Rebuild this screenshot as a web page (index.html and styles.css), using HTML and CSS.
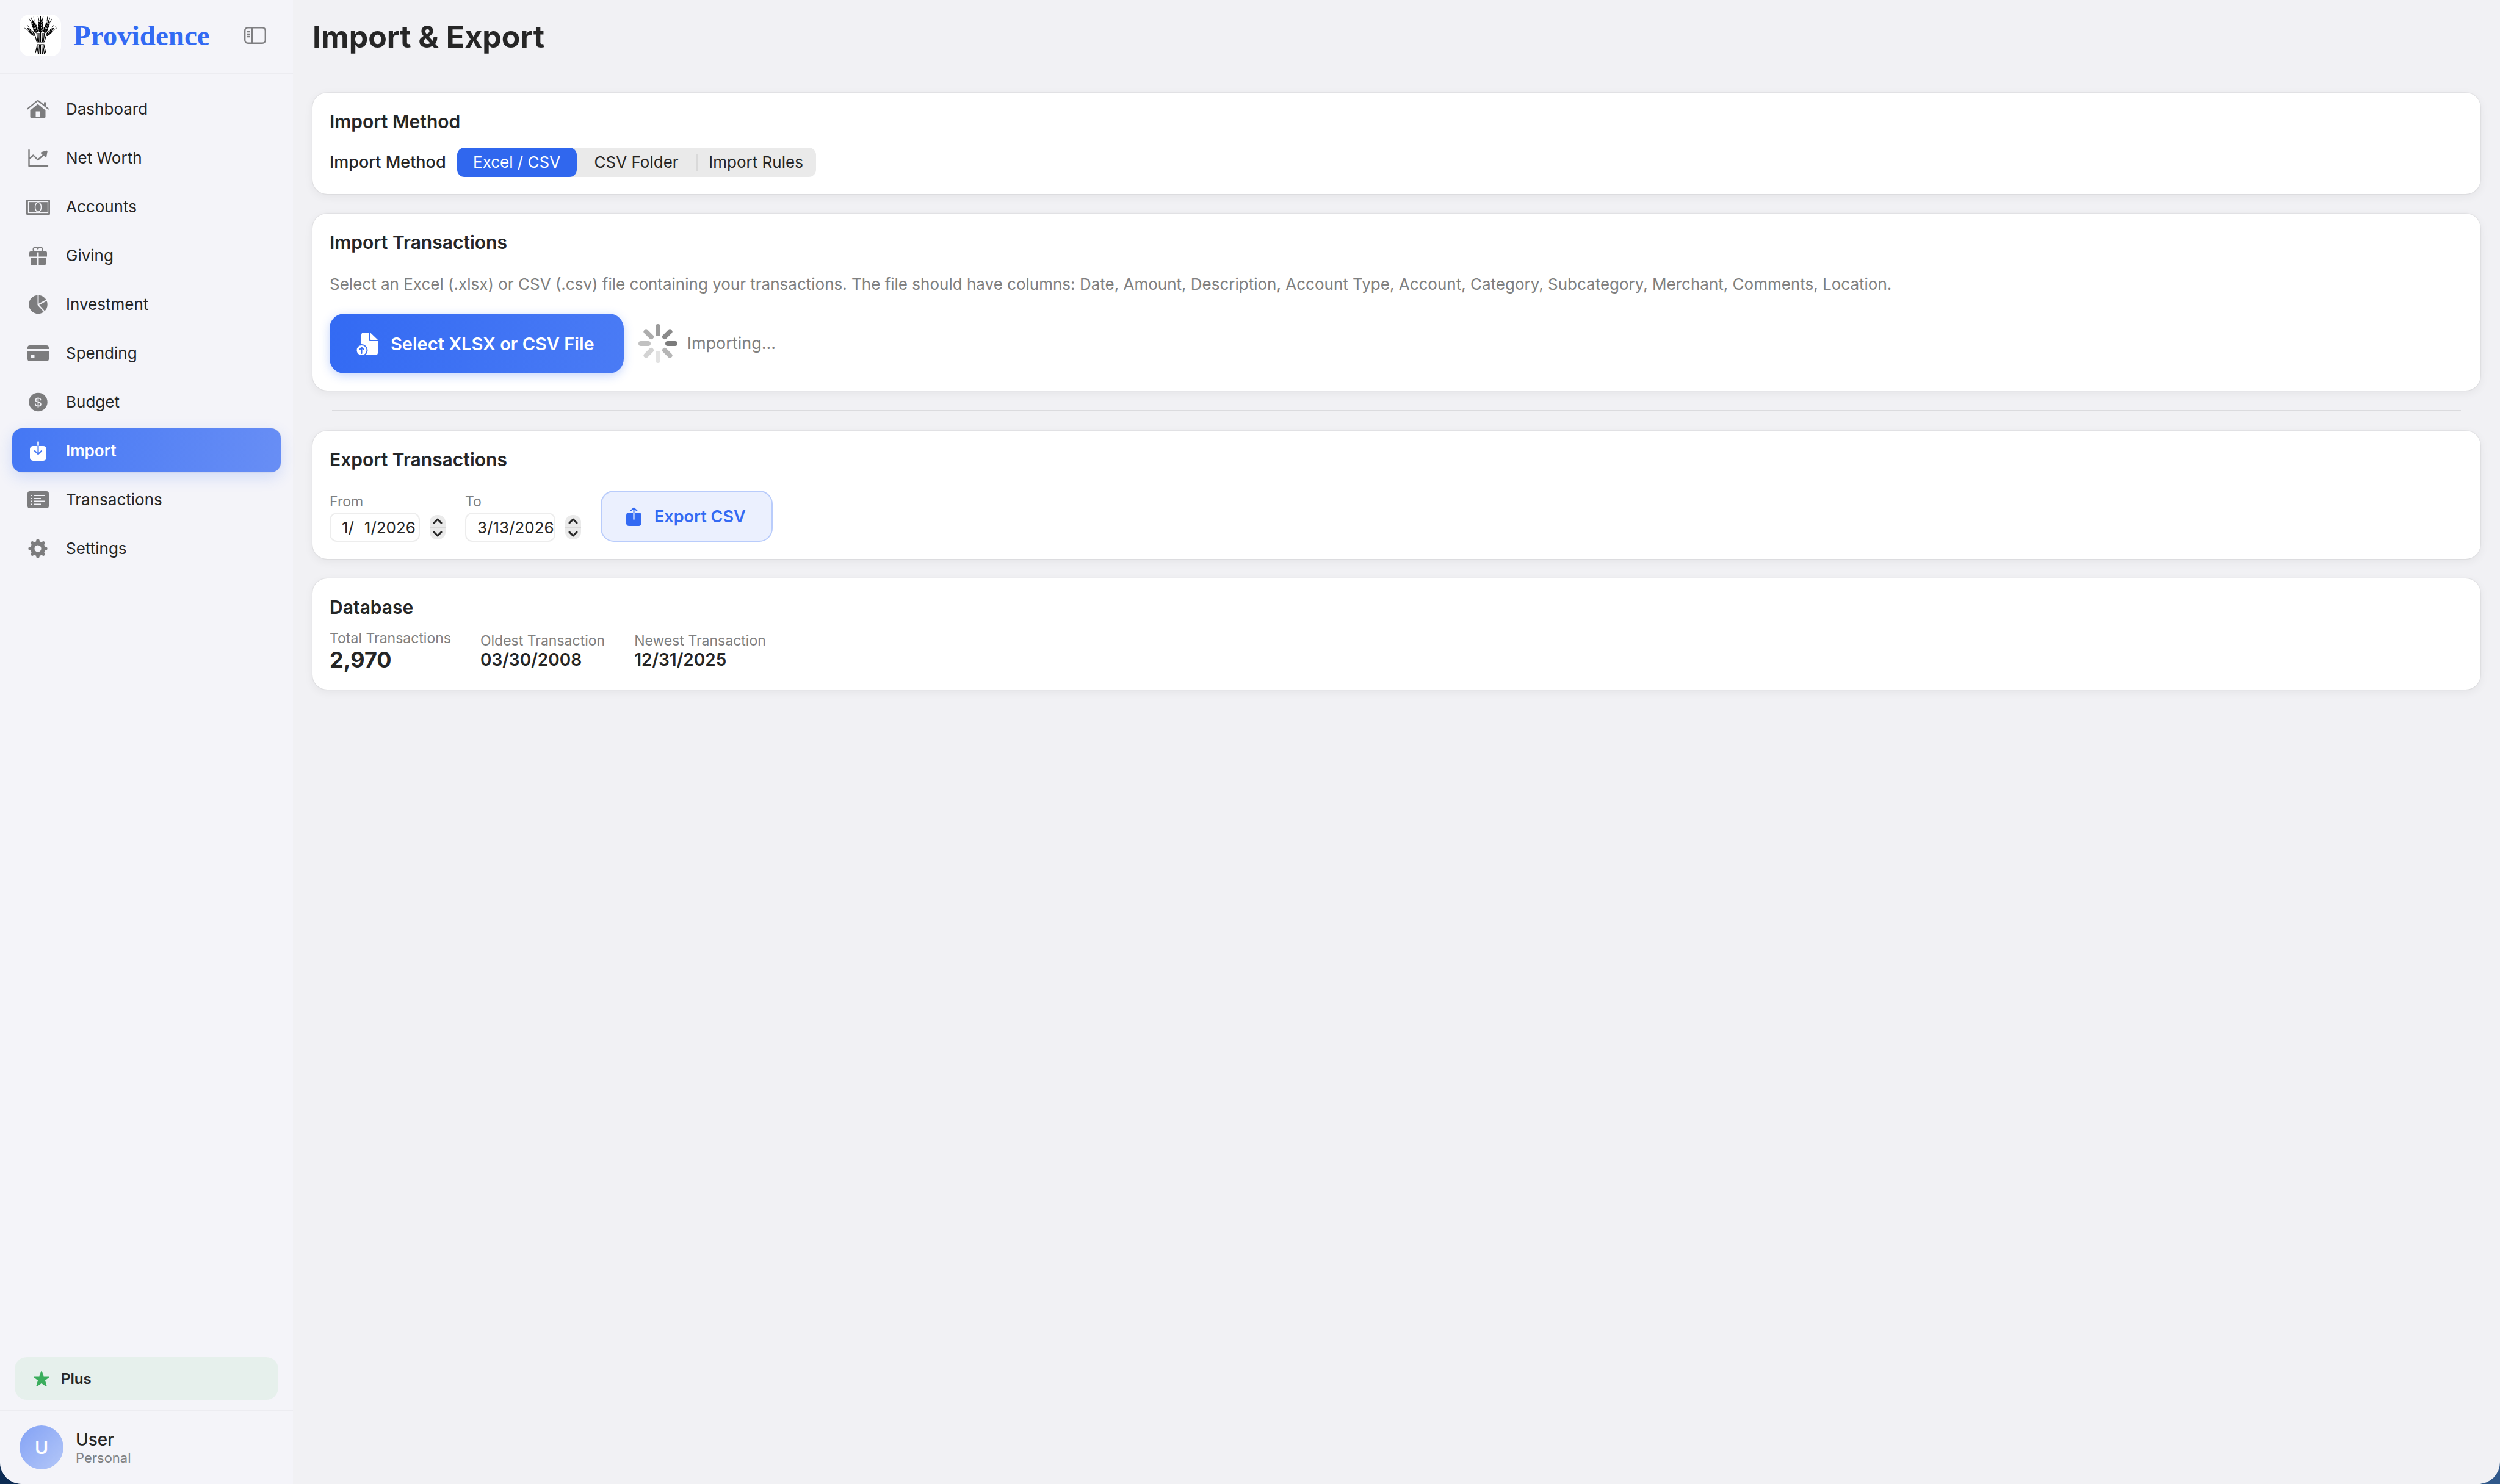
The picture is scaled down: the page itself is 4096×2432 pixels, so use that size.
FILE: index.html
```html
<!DOCTYPE html>
<html lang="en">
<head>
    <meta charset="UTF-8">
    <meta name="viewport" content="width=device-width, initial-scale=1.0">
    <title>Providence - Import &amp; Export</title>
    <link rel="stylesheet" href="styles.css">
</head>
<body>

    <div class="window">
        <!-- Sidebar -->
        <aside class="sidebar">
            <header class="brand">
                <svg class="brand-logo" viewBox="0 0 68 68" aria-hidden="true">
                    <defs>
                        <g id="ear">
                            <path d="M0 0V-27M-2.500 -19L-4.500 -27M2.500 -19L4.500 -27" stroke="#000" stroke-width="1" fill="none"/>
                            <ellipse cx="0" cy="-19" rx="1.500" ry="3"/>
                            <ellipse cx="-2" cy="-15" rx="1.400" ry="2.800" transform="rotate(-28 -2 -15)"/>
                            <ellipse cx="2" cy="-15" rx="1.400" ry="2.800" transform="rotate(28 2 -15)"/>
                            <ellipse cx="-2.200" cy="-10.500" rx="1.500" ry="2.800" transform="rotate(-28 -2.200 -10.500)"/>
                            <ellipse cx="2.200" cy="-10.500" rx="1.500" ry="2.800" transform="rotate(28 2.200 -10.500)"/>
                            <ellipse cx="-2.200" cy="-6" rx="1.500" ry="2.800" transform="rotate(-28 -2.200 -6)"/>
                            <ellipse cx="2.200" cy="-6" rx="1.500" ry="2.800" transform="rotate(28 2.200 -6)"/>
                            <ellipse cx="-1.800" cy="-2" rx="1.300" ry="2.400" transform="rotate(-28 -1.800 -2)"/>
                            <ellipse cx="1.800" cy="-2" rx="1.300" ry="2.400" transform="rotate(28 1.800 -2)"/>
                        </g>
                    </defs>
                    <use href="#ear" transform="translate(34.500 29)"/>
                    <use href="#ear" transform="translate(28 29) rotate(-20) scale(.95)"/>
                    <use href="#ear" transform="translate(41 29) rotate(20) scale(.95)"/>
                    <use href="#ear" transform="translate(25 34) rotate(-45) scale(.75)"/>
                    <use href="#ear" transform="translate(44 34) rotate(45) scale(.75)"/>
                    <g fill="none" stroke="#000" stroke-width="1.200">
                        <path d="M34.500 29V45M32 30V45M37 30V45M28 29L30 45M41 29L39 45M25 33L28.500 45M44 33L40.500 45M30 30L31 45M39 30L38 45"/>
                        <path d="M34.500 50V65M32.500 50L31.500 65M36.500 50L37.500 65M30.500 50L28.500 64M38.500 50L40.500 64M29 50L26 63M40 50L43 63"/>
                    </g>
                    <path d="M28.500 45.500h12v1.500h-12zM28.500 48.500h12V50h-12z"/>
                </svg>
                <span class="brand-name">Providence</span>
                <button class="sidebar-toggle" type="button" aria-label="Toggle sidebar">
                    <svg viewBox="0 0 36 28" fill="none" stroke="currentColor" stroke-width="2.400" aria-hidden="true">
                        <rect x="1.200" y="1.200" width="33.600" height="25.600" rx="5"/>
                        <path d="M13 1v26M5 8h5M5 12h5M5 16h5"/>
                    </svg>
                </button>
            </header>

            <nav class="nav">
                <a class="nav-item" href="#dashboard">
                    <svg class="nav-icon" viewBox="0 0 40 32" aria-hidden="true">
                        <path d="M3 15.500L18.600 2.600q1.400-1.100 2.800 0L37 15.500" fill="none" stroke="currentColor" stroke-width="2.200" stroke-linecap="round"/>
                        <path d="M30 4.500h3.500v8.500L30 10zM20 7.500l12.500 10.300V28q0 3-3 3h-19q-3 0-3-3V17.800zM16.500 19.500V29h7.500v-9.500z" fill="currentColor" fill-rule="evenodd"/>
                    </svg>
                    Dashboard
                </a>
                <a class="nav-item" href="#net-worth">
                    <svg class="nav-icon" viewBox="0 0 40 32" fill="none" stroke="currentColor" stroke-width="2.400" stroke-linecap="round" stroke-linejoin="round" aria-hidden="true">
                        <path d="M5.500 3v26H36M6 17l6.500-5.500L20 19l9.500-8.500"/>
                        <path d="M26 7.500l8.500-2.500-1.500 8.500z" fill="currentColor"/>
                    </svg>
                    Net Worth
                </a>
                <a class="nav-item" href="#accounts">
                    <svg class="nav-icon" viewBox="0 0 40 32" aria-hidden="true">
                        <rect x="1" y="4" width="39" height="25" rx="1.500" fill="currentColor"/>
                        <rect x="4.500" y="7.500" width="32" height="18" fill="none" stroke="#f4f4f9" stroke-width="1.300"/>
                        <ellipse cx="20.500" cy="16.500" rx="5" ry="7.800" fill="currentColor" stroke="#f4f4f9" stroke-width="1.500"/>
                    </svg>
                    Accounts
                </a>
                <a class="nav-item" href="#giving">
                    <svg class="nav-icon" viewBox="0 0 40 32" aria-hidden="true">
                        <path d="M20 9.500h-5a3.800 3.800 0 1 1 5-4.200a3.800 3.800 0 1 1 5 4.200z" fill="none" stroke="currentColor" stroke-width="2"/>
                        <path d="M8 9h11v8.500H6V11q0-2 2-2zM21.500 9H33q2 0 2 2v6.500H21.500zM8 19.500h11V32h-8q-3 0-3-3zM21.500 19.500H33V29q0 3-3 3h-8.500z" fill="currentColor"/>
                    </svg>
                    Giving
                </a>
                <a class="nav-item" href="#investment">
                    <svg class="nav-icon" viewBox="0 0 40 32" aria-hidden="true">
                        <circle cx="20.500" cy="16" r="15.200" fill="currentColor"/>
                        <path d="M20.500 0v16.500L32 29M20.500 16.500L36 8" fill="none" stroke="#f4f4f9" stroke-width="2"/>
                    </svg>
                    Investment
                </a>
                <a class="nav-item" href="#spending">
                    <svg class="nav-icon" viewBox="0 0 40 32" aria-hidden="true">
                        <path d="M3 9V7q0-4 4-4h27q4 0 4 4v2zM3 12.500h35V25q0 4-4 4H7q-4 0-4-4zM9.500 18Q8 18 8 19.500v3Q8 24 9.500 24h3.500q1.500 0 1.500-1.500v-3Q14.500 18 13 18z" fill="currentColor" fill-rule="evenodd"/>
                    </svg>
                    Spending
                </a>
                <a class="nav-item" href="#budget">
                    <svg class="nav-icon" viewBox="0 0 40 32" aria-hidden="true">
                        <circle cx="20.500" cy="16" r="15.200" fill="currentColor"/>
                        <path d="M24.700 12.500q-.5-3-4.200-3t-4.200 2.900q0 2.600 4.200 3.400t4.400 3.600q0 3.100-4.400 3.100t-4.500-3.300M20.500 7.500v17" fill="none" stroke="#f4f4f9" stroke-width="1.700" stroke-linecap="round"/>
                    </svg>
                    Budget
                </a>
                <a class="nav-item active" href="#import" aria-current="page">
                    <svg class="nav-icon" viewBox="0 0 40 32" aria-hidden="true">
                        <rect x="7" y="8" width="27" height="24" rx="5" fill="#fff"/>
                        <path d="M20.500 1.500V8" stroke="#fff" stroke-width="2.600" stroke-linecap="round"/>
                        <path d="M20.500 8v12.500M15 16l5.500 5.200L26 16" fill="none" stroke="#487af4" stroke-width="2.200" stroke-linecap="round" stroke-linejoin="round"/>
                    </svg>
                    Import
                </a>
                <a class="nav-item" href="#transactions">
                    <svg class="nav-icon" viewBox="0 0 40 32" aria-hidden="true">
                        <rect x="3" y="2" width="35" height="28" rx="4" fill="currentColor"/>
                        <path d="M8.500 9H11M8.500 14H11M8.500 18.500H11M8.500 23.500H11M13.500 9H32M13.500 14H25M13.500 18.500H32M13.500 23.500H25" stroke="#f4f4f9" stroke-width="2"/>
                    </svg>
                    Transactions
                </a>
                <a class="nav-item" href="#settings">
                    <svg class="nav-icon" viewBox="0 0 40 32" fill="none" stroke="currentColor" aria-hidden="true">
                        <circle cx="20" cy="16" r="8.800" stroke-width="6.500"/>
                        <path d="M20 3.200v2.500M20 26.300v2.500M7.200 16h2.500M30.300 16h2.500M11 7l2 2M27 23l2 2M11 25l2-2M27 9l2-2" stroke-width="5.600" stroke-linecap="round"/>
                    </svg>
                    Settings
                </a>
            </nav>

            <div class="plan">
                <svg class="plan-icon" viewBox="0 0 28 28" fill="#3bad5d" stroke="#3bad5d" stroke-width="2" stroke-linejoin="round" aria-hidden="true">
                    <path d="M14 2l2.900 8.500h9.100l-7.200 5.400L21.500 25 14 19.600 6.500 25l2.700-9.100L2 10.500h9.100z"/>
                </svg>
                Plus
            </div>

            <footer class="user">
                <div class="avatar">U</div>
                <div class="user-info">
                    <div class="user-name">User</div>
                    <div class="user-type">Personal</div>
                </div>
            </footer>
        </aside>

        <!-- Main content -->
        <main class="main">
            <h1 class="page-title">Import &amp; Export</h1>

            <section class="card">
                <h2 class="card-title">Import Method</h2>
                <div class="method" role="radiogroup" aria-labelledby="method-label">
                    <span class="method-label" id="method-label">Import Method</span>
                    <div class="segments">
                        <label class="segment"><input type="radio" name="method" checked><span>Excel / CSV</span></label>
                        <label class="segment"><input type="radio" name="method"><span>CSV Folder</span></label>
                        <label class="segment divided"><input type="radio" name="method"><span>Import Rules</span></label>
                    </div>
                </div>
            </section>

            <section class="card">
                <h2 class="card-title">Import Transactions</h2>
                <p class="description">Select an Excel (.xlsx) or CSV (.csv) file containing your transactions. The file should have columns: Date, Amount, Description, Account Type, Account, Category, Subcategory, Merchant, Comments, Location.</p>
                <div class="import-row">
                    <button class="button-primary" type="button">
                        <svg class="file-icon" viewBox="0 0 36 38" aria-hidden="true">
                            <path d="M12 0h8v12q0 2 2 2h13v19q0 4-4 4H12q-4 0-4-4V4q0-4 4-4z" fill="#fff"/>
                            <path d="M22.500 0L35 12H24q-1.500 0-1.500-1.500z" fill="#fff"/>
                            <circle cx="8.500" cy="29" r="9" fill="#fff" stroke="#3a6ff4" stroke-width="2"/>
                            <path d="M8.500 34V24.500M5 28l3.500-3.500L12 28" fill="none" stroke="#3a6ff4" stroke-width="2" stroke-linecap="round" stroke-linejoin="round"/>
                        </svg>
                        Select XLSX or CSV File
                    </button>
                    <div class="progress" role="status">
                        <svg class="spinner" viewBox="-32 -32 64 64" stroke-width="8" stroke-linecap="round" aria-hidden="true">
                            <path d="M0 -16V-28" stroke="#9b9b9b"/>
                            <path d="M11 -11L19.500 -19.500" stroke="#8a8a8a"/>
                            <path d="M16 0H28" stroke="#7b7b7b"/>
                            <path d="M11 11L19.500 19.500" stroke="#b6b6b6"/>
                            <path d="M0 16V28" stroke="#e3e3e3"/>
                            <path d="M-11 11L-19.500 19.500" stroke="#d3d3d3"/>
                            <path d="M-16 0H-28" stroke="#c1c1c1"/>
                            <path d="M-11 -11L-19.500 -19.500" stroke="#adadad"/>
                        </svg>
                        Importing...
                    </div>
                </div>
            </section>

            <hr class="divider">

            <section class="card">
                <h2 class="card-title">Export Transactions</h2>
                <div class="export-row">
                    <div class="field">
                        <label for="from">From</label>
                        <div class="date">
                            <input id="from" type="text" value="1/&#8199;1/2026">
                            <div class="stepper">
                                <button type="button" aria-label="Later start date"><svg viewBox="0 0 16 10"><path d="M2 8l6-6 6 6"/></svg></button>
                                <button type="button" aria-label="Earlier start date"><svg viewBox="0 0 16 10"><path d="M2 2l6 6 6-6"/></svg></button>
                            </div>
                        </div>
                    </div>
                    <div class="field">
                        <label for="to">To</label>
                        <div class="date">
                            <input id="to" type="text" value="3/13/2026">
                            <div class="stepper">
                                <button type="button" aria-label="Later end date"><svg viewBox="0 0 16 10"><path d="M2 8l6-6 6 6"/></svg></button>
                                <button type="button" aria-label="Earlier end date"><svg viewBox="0 0 16 10"><path d="M2 2l6 6 6-6"/></svg></button>
                            </div>
                        </div>
                    </div>
                    <button class="button-secondary" type="button">
                        <svg class="share-icon" viewBox="0 0 26 32" aria-hidden="true">
                            <rect x="0" y="9" width="25" height="22" rx="4.500" fill="currentColor"/>
                            <path d="M12.500 9v11" stroke="#ebf0fe" stroke-width="2.200" stroke-linecap="round"/>
                            <path d="M12.500 9V1.500M7.500 6l5-4.500 5 4.500" fill="none" stroke="currentColor" stroke-width="2" stroke-linecap="round" stroke-linejoin="round"/>
                        </svg>
                        Export CSV
                    </button>
                </div>
            </section>

            <section class="card">
                <h2 class="card-title">Database</h2>
                <dl class="stats">
                    <div class="stat">
                        <dt>Total Transactions</dt>
                        <dd class="total">2,970</dd>
                    </div>
                    <div class="stat">
                        <dt>Oldest Transaction</dt>
                        <dd>03/30/2008</dd>
                    </div>
                    <div class="stat">
                        <dt>Newest Transaction</dt>
                        <dd>12/31/2025</dd>
                    </div>
                </dl>
            </section>
        </main>
    </div>

</body>
</html>
```
FILE: styles.css
```css
* {
    box-sizing: border-box;
}

body {
    margin: 0;
    background: linear-gradient(to right, #0d2c54, #30588a);  /* Desktop behind the window corners */
    font-family: Inter, "Liberation Sans", sans-serif;
    font-size: 26px;
    line-height: 36px;
    color: #262626;
}

h1, h2, p, dl, dd {
    margin: 0;
}

button, input {
    font: inherit;
    color: inherit;
}

button {
    border: none;
    padding: 0;
    cursor: pointer;
}

svg {
    display: block;
    flex: none;
}

.window {
    display: flex;
    min-height: 100vh;
    background-color: #f1f1f4;
    border-radius: 0 0 36px 36px;
    overflow: hidden;
}

/* Sidebar */
.sidebar {
    display: flex;
    flex-direction: column;
    flex: none;
    width: 480px;
    background-color: #f4f4f9;
}

.brand {
    display: flex;
    align-items: center;
    padding: 24px 44px 28px 32px;
    border-bottom: 2px solid #ececf1;
}

.brand-logo {
    width: 68px;
    height: 68px;
    background-color: #fff;
    border-radius: 16px;
}

.brand-name {
    margin-left: 20px;
    font-family: "Liberation Serif", serif;
    font-size: 47px;
    font-weight: bold;
    line-height: 52px;
    color: #336af3;
}

.sidebar-toggle {
    margin-left: auto;
    background: none;
    color: #7f7f82;
}

.sidebar-toggle svg {
    width: 36px;
    height: 28px;
}

.nav {
    display: flex;
    flex-direction: column;
    gap: 8px;
    padding: 20px;
}

.nav-item {
    display: flex;
    align-items: center;
    gap: 26px;
    height: 72px;
    padding: 2px 22px 0;
    border-radius: 16px;
    color: #262626;
    text-decoration: none;
}

.nav-icon {
    width: 40px;
    height: 32px;
    color: #7c7c7e;
}

.nav-item.active {
    background: linear-gradient(100deg, #4477f4, #688ef5);
    box-shadow: 0 8px 24px rgba(51, 106, 243, 0.18), 0 0 1px rgba(0, 0, 0, 0.4);
    color: #fff;
    font-weight: 600;
}

.plan {
    display: flex;
    align-items: center;
    gap: 18px;
    height: 70px;
    margin: auto 24px 16px;
    padding: 2px 30px 0;
    background-color: #e6f0ec;
    border-radius: 20px;
    font-size: 24px;
    font-weight: 600;
}

.plan-icon {
    width: 28px;
    height: 28px;
}

.user {
    display: flex;
    align-items: center;
    gap: 20px;
    padding: 24px 32px;
    border-top: 2px solid #ececf1;
}

.avatar {
    display: flex;
    align-items: center;
    justify-content: center;
    width: 72px;
    height: 72px;
    border-radius: 50%;
    background: linear-gradient(135deg, #83a2f5, #b4c7f8);
    color: #fff;
    font-size: 30px;
    font-weight: 600;
}

.user-name {
    font-size: 28px;
    font-weight: 500;
    line-height: 34px;
}

.user-type {
    font-size: 22px;
    line-height: 26px;
    color: #808082;
}

/* Main */
.main {
    display: flex;
    flex-direction: column;
    flex: 1;
    gap: 32px;
    min-width: 0;
    padding: 28px 32px 32px;
}

.page-title {
    margin-bottom: 28px;
    font-size: 50px;
    font-weight: 700;
    line-height: 64px;
}

.card {
    padding: 28px;
    background-color: #fff;
    border-radius: 24px;
    box-shadow: 0 0 2px rgba(0, 0, 0, 0.18), 0 4px 16px rgba(0, 0, 0, 0.06);
}

.card-title {
    font-size: 30px;
    font-weight: 600;
    line-height: 38px;
}

.method {
    display: flex;
    align-items: center;
    gap: 18px;
    margin-top: 24px;
}

.method-label {
    font-size: 27px;
    font-weight: 500;
}

.segments {
    display: flex;
    background-color: #eaeaea;
    border-radius: 12px;
}

.segment {
    position: relative;
    cursor: pointer;
}

.segment input {
    position: absolute;
    opacity: 0;
}

.segment span {
    display: flex;
    align-items: center;
    justify-content: center;
    width: 196px;
    height: 48px;
    border-radius: 12px;
}

.segment input:checked + span {
    background-color: #3067ee;
    color: #fff;
}

.segment.divided::before {
    content: "";
    position: absolute;
    left: 0;
    top: 10px;
    bottom: 10px;
    width: 2px;
    background-color: #d9d9d9;
}

.description {
    margin: 32px 0 30px;
    color: #808080;
}

.import-row {
    display: flex;
    align-items: center;
    gap: 24px;
}

.button-primary {
    display: flex;
    align-items: center;
    gap: 20px;
    height: 98px;
    padding: 2px 48px 0 44px;
    background: linear-gradient(100deg, #336af3, #4a7bf5);
    border-radius: 24px;
    box-shadow: 0 4px 16px rgba(51, 106, 243, 0.28);
    color: #fff;
    font-size: 29px;
    font-weight: 600;
}

.file-icon {
    width: 36px;
    height: 38px;
    overflow: visible;
}

.progress {
    display: flex;
    align-items: center;
    gap: 16px;
    color: #808080;
    font-size: 27px;
}

.spinner {
    width: 64px;
    height: 64px;
}

.divider {
    align-self: stretch;
    height: 2px;
    margin: 0 32px;
    border: none;
    background-color: #dbdbde;
}

.export-row {
    display: flex;
    align-items: flex-end;
    gap: 32px;
    margin-top: 32px;
}

.field {
    display: flex;
    flex-direction: column;
    gap: 4px;
}

.field label, .stat dt {
    font-size: 23px;
    line-height: 28px;
    color: #808080;
}

.date {
    display: flex;
    align-items: center;
    gap: 16px;
}

.date input {
    width: 148px;
    height: 48px;
    padding: 0 0 0 18px;
    border: 2px solid #ededed;
    border-radius: 12px;
    background-color: #fff;
}

.stepper {
    display: flex;
    flex-direction: column;
    width: 26px;
    height: 40px;
    border-radius: 12px;
    background-color: #eaeaea;
}

.stepper button {
    display: flex;
    align-items: center;
    justify-content: center;
    flex: 1;
    background: none;
}

.stepper button + button {
    border-top: 2px solid #d9d9d9;
}

.stepper svg {
    width: 16px;
    height: 10px;
    fill: none;
    stroke: #262626;
    stroke-width: 3;
    stroke-linecap: round;
    stroke-linejoin: round;
}

.button-secondary {
    display: flex;
    align-items: center;
    gap: 20px;
    height: 84px;
    padding: 2px 42px 0 40px;
    background-color: #ebf0fe;
    border: 2px solid #b9ccfb;
    border-radius: 22px;
    color: #336af3;
    font-size: 27px;
    font-weight: 600;
}

.share-icon {
    width: 26px;
    height: 32px;
}

.stats {
    display: flex;
    align-items: center;
    gap: 48px;
    margin-top: 18px;
}

.stat dd {
    font-size: 28px;
    font-weight: 600;
    line-height: 34px;
}

.stat .total {
    font-size: 36px;
    font-weight: 700;
    line-height: 42px;
}
```
